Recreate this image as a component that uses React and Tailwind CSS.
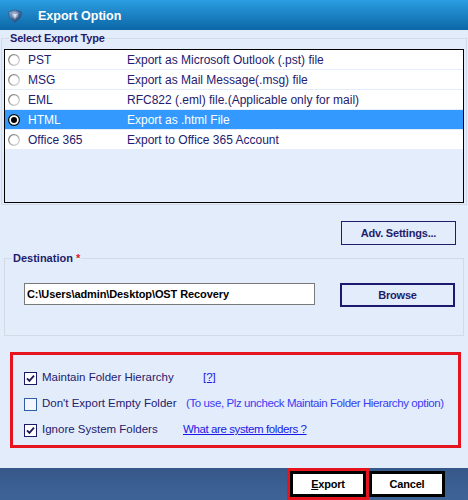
import React from "react";

function Shield() {
  return (
    <svg width="16" height="14" viewBox="0 0 16 14">
      <defs>
        <linearGradient id="sg" x1="0" y1="0" x2="1" y2="1">
          <stop offset="0" stopColor="#9fb6d6" />
          <stop offset="0.5" stopColor="#4e6f9e" />
          <stop offset="1" stopColor="#243f6b" />
        </linearGradient>
      </defs>
      <path d="M1.5 3 L8 0.8 L14.5 3 L13.5 8.5 L8 13.2 L2.5 8.5 Z" fill="url(#sg)" stroke="#2c4670" strokeWidth="0.6" />
      <path d="M4.5 4 L8 2.8 L11.5 4 L10.8 7.6 L8 10.2 L5.2 7.6 Z" fill="#c9d6ea" opacity="0.55" />
      <path d="M6 5 L10 5 L8 9 Z" fill="#ffffff" opacity="0.7" />
    </svg>
  );
}

function Radio({ checked }) {
  return (
    <svg width="12" height="12" viewBox="0 0 12 12" className="shrink-0">
      <defs>
        <linearGradient id="rg" x1="0" y1="0" x2="1" y2="1">
          <stop offset="0" stopColor="#6f6f6f" />
          <stop offset="1" stopColor="#e2e2e2" />
        </linearGradient>
      </defs>
      {checked ? (
        <>
          <circle cx="6" cy="6" r="5.4" fill="#ffffff" stroke="#000000" strokeWidth="1.2" />
          <circle cx="6" cy="6" r="3" fill="#000000" />
        </>
      ) : (
        <circle cx="6" cy="6" r="5.3" fill="#ffffff" stroke="url(#rg)" strokeWidth="1.3" />
      )}
    </svg>
  );
}

function Check({ checked }) {
  return checked ? (
    <svg width="13" height="13" viewBox="0 0 13 13" className="shrink-0">
      <rect x="0.5" y="0.5" width="12" height="12" fill="#ffffff" stroke="#1c1a66" />
      <path d="M3 6.3 L5.4 8.8 L10 3.6" fill="none" stroke="#1c1a55" strokeWidth="1.8" />
    </svg>
  ) : (
    <svg width="13" height="13" viewBox="0 0 13 13" className="shrink-0">
      <rect x="0.5" y="0.5" width="12" height="12" fill="#f3f6fc" stroke="#2f5ea8" />
    </svg>
  );
}

export default function App() {
  const rows = [
    ["PST", "Export as Microsoft Outlook (.pst) file"],
    ["MSG", "Export as Mail Message(.msg) file"],
    ["EML", "RFC822 (.eml) file.(Applicable only for mail)"],
    ["HTML", "Export as .html File"],
    ["Office 365", "Export to Office 365 Account"],
  ];
  const sel = 3;
  return (
    <div className="w-[468px] h-[500px] flex flex-col overflow-hidden bg-[#e3ecfb] font-['Liberation_Sans',Arial,sans-serif]">
      <div className="h-[30px] shrink-0 flex items-center pl-[7px] pt-[2px] bg-gradient-to-b from-[#2b9de2] to-[#0b67a6]">
        <Shield />
        <span className="ml-[15px] text-white font-bold text-[12.5px] leading-none">Export Option</span>
      </div>

      <div className="flex-1 flex flex-col">
        <fieldset className="mt-[1px] mx-[1px] border border-[#d2dae6] px-[2px] pt-[4px] pb-[1px]">
          <legend className="ml-[5px] px-[1px] text-[11px] tracking-[-0.2px] leading-[14px] font-bold text-[#1f1d6b]">
            Select Export Type
          </legend>
          <div className="h-[154px] border border-black bg-[#e4edfb] flex flex-col gap-[1px]">
            {rows.map((r, i) => (
              <div
                key={r[0]}
                className={
                  i === sel
                    ? "h-[19px] flex items-center bg-[#3399ff] text-white text-[12px]"
                    : "h-[19px] flex items-center bg-white text-[#24206e] text-[12px]"
                }
              >
                <div className="ml-[3px]">
                  <Radio checked={i === sel} />
                </div>
                <span className="ml-[8px] w-[99px]">{r[0]}</span>
                <span>{r[1]}</span>
              </div>
            ))}
          </div>
        </fieldset>

        <button className="self-end mr-[12px] mt-[16px] w-[115px] h-[24px] border border-[#1f1d6b] text-[11px] font-bold text-[#1f1d6b] tracking-[-0.2px] bg-[#e3ecfb]">
          Adv. Settings...
        </button>

        <fieldset className="mt-[6px] mx-[4px] border border-[#d2dae6] pl-[7px] pt-[18px] pb-[28px]">
          <legend className="ml-[0px] px-[1px] text-[11px] leading-[14px] font-bold text-[#1f1d6b]">
            Destination <span className="text-[#e0141c]">*</span>
          </legend>
          <div className="flex items-start">
            <div className="ml-[12px] w-[291px] h-[22px] border border-[#7a7a7a] bg-white flex items-center px-[2px] text-[11px] font-bold text-black tracking-[-0.1px]">
              C:\Users\admin\Desktop\OST Recovery
            </div>
            <button className="ml-[25px] w-[115px] h-[24px] border-2 border-[#1c1a6e] text-[11px] font-bold text-[#1f1d6b] tracking-[-0.2px]">
              Browse
            </button>
          </div>
        </fieldset>

        <div className="mt-[16px] ml-[10px] w-[451px] border-[3px] border-[#e5141e] pl-[11px] pt-[10px] pb-[2px] text-[11.5px] text-[#24206e]">
          <div className="h-[26px] flex items-center">
            <Check checked />
            <span className="ml-[5px] w-[141px]">Maintain Folder Hierarchy</span>
            <a className="ml-[20px] underline text-[#1818e8]">[?]</a>
          </div>
          <div className="h-[26px] flex items-center">
            <Check checked={false} />
            <span className="ml-[5px] w-[141px]">Don't Export Empty Folder</span>
            <span className="ml-[3px] text-[#3a3af5] tracking-[-0.4px]">
              (To use, Plz uncheck Maintain Folder Hierarchy option)
            </span>
          </div>
          <div className="h-[26px] flex items-center">
            <Check checked />
            <span className="ml-[5px] w-[141px]">Ignore System Folders</span>
            <a className="underline text-[#1818e8] tracking-[-0.4px]">What are system folders ?</a>
          </div>
        </div>
      </div>

      <div className="h-[32px] shrink-0 flex justify-end items-start pr-[23px] bg-gradient-to-b from-[#365889] to-[#3e6497]">
        <div className="w-[82px] h-[32px] border-[3px] border-[#e5141e] flex">
          <button className="w-full h-[26px] border-[3px] border-black bg-white text-[11px] font-bold text-black tracking-[-0.2px]">
            <span className="underline">E</span>xport
          </button>
        </div>
        <button className="mt-[3px] w-[76px] h-[26px] border-[3px] border-black bg-white text-[11px] font-bold text-black tracking-[-0.2px]">
          Cancel
        </button>
      </div>
    </div>
  );
}
